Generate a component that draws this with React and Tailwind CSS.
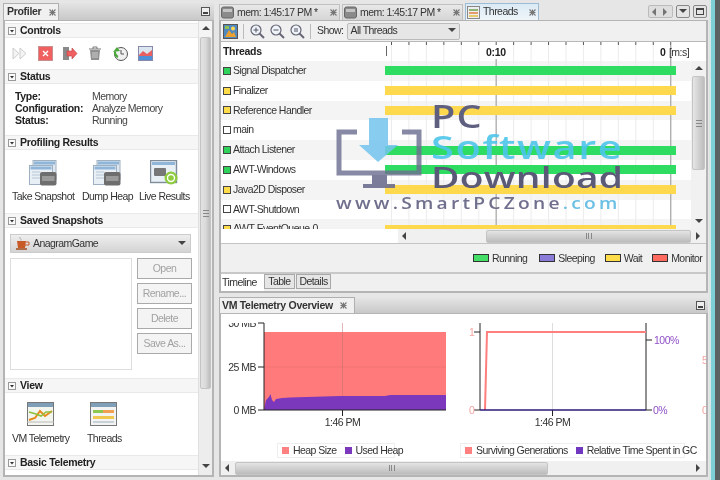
import React from "react";

const B = "font-bold tracking-[-0.3px]";

function Tri({ dir = "down", cls = "" }) {
  const p = { down: "0,1 8,1 4,5", up: "0,5 8,5 4,1", left: "5,0 5,8 1,4", right: "1,0 1,8 5,4" }[dir];
  return (
    <svg width="8" height="8" viewBox="0 0 8 8" className={`shrink-0 ${cls}`}>
      <polygon points={p} fill="#444" />
    </svg>
  );
}

function CloseX() {
  return (
    <svg width="7" height="7" viewBox="0 0 7 7" className="shrink-0">
      <path d="M0.5 0.5 L6.5 6.5 M6.5 0.5 L0.5 6.5 M0.5 3.5 H6.5 M3.5 .5 V6.5" stroke="#777" strokeWidth="1.1" />
    </svg>
  );
}

function Minimize() {
  return (
    <div className="w-[9px] h-[9px] border border-[#555] bg-[#eee] flex items-end justify-center pb-[1px]">
      <div className="w-[5px] h-[2px] bg-[#444]" />
    </div>
  );
}

function SectionHeader({ title }) {
  return (
    <div className="flex items-center h-[15px] shrink-0 bg-[#f6f6f6] border-y border-[#e9e9e9] pl-[3px] gap-[4px]">
      <div className="w-[8px] h-[8px] border border-[#999] bg-[#fafafa] flex items-center justify-center">
        <svg width="6" height="6" viewBox="0 0 6 6"><polygon points="1,2 5,2 3,4.5" fill="#333" /></svg>
      </div>
      <span className={`${B} text-[#222] leading-none`}>{title}</span>
    </div>
  );
}

const SnapIcon = () => (
  <svg width="28" height="26" viewBox="0 0 28 26" className="shrink-0">
    <rect x="4" y="0.5" width="23" height="19" fill="#dfe8f0" stroke="#9fb0c0" />
    <rect x="5" y="1.5" width="21" height="3" fill="#8fb6d8" />
    <rect x="0.5" y="5.5" width="23" height="19" fill="#e8eff5" stroke="#9fb0c0" />
    <rect x="1.5" y="6.5" width="21" height="3" fill="#8fb6d8" />
    <path d="M3 12h8M3 15h8M3 18h8" stroke="#b5c5d3" />
    <rect x="11" y="12" width="16.5" height="13.5" rx="2" fill="#6e6e6e" />
    <rect x="13" y="16" width="12.5" height="5" fill="#9a9a9a" />
  </svg>
);

const LiveIcon = () => (
  <svg width="28" height="26" viewBox="0 0 28 26" className="shrink-0">
    <rect x="0.5" y="0.5" width="26" height="22" fill="#e8eff5" stroke="#7f8c99" strokeWidth="1.4" />
    <rect x="2" y="2" width="23" height="3" fill="#8fb6d8" />
    <rect x="4" y="8" width="12" height="8" rx="1" fill="#777" />
    <circle cx="21" cy="18" r="6.5" fill="#8ecb3e" />
    <circle cx="21" cy="18" r="3.5" fill="none" stroke="#fff" strokeWidth="1.4" />
  </svg>
);

const VmIcon = () => (
  <svg width="27" height="24" viewBox="0 0 27 24" className="shrink-0">
    <rect x="0.5" y="0.5" width="26" height="23" fill="#f3f5ef" stroke="#777" />
    <rect x="1" y="1" width="25" height="4" fill="#7f9fb8" />
    <path d="M2 18 L8 16 L13 9 L18 14 L25 9" stroke="#e88a1c" strokeWidth="2" fill="none" />
    <path d="M2 10 L9 12 L14 14 L19 10 L25 10" stroke="#90c040" strokeWidth="1.6" fill="none" />
    <path d="M0 20 H27" stroke="#bbb" />
  </svg>
);

const ThreadsIcon = () => (
  <svg width="27" height="24" viewBox="0 0 27 24" className="shrink-0">
    <rect x="0.5" y="0.5" width="26" height="23" fill="#f3f3f3" stroke="#777" />
    <rect x="1" y="1" width="25" height="4" fill="#7f9fb8" />
    <rect x="3" y="8" width="10" height="3" fill="#8cc850" />
    <rect x="13" y="8" width="11" height="3" fill="#f0a050" />
    <rect x="3" y="14" width="21" height="3" fill="#f0c850" />
    <rect x="3" y="19" width="21" height="2" fill="#c8d0d8" />
  </svg>
);

const TabIconGrey = () => (
  <svg width="13" height="13" viewBox="0 0 13 13" className="shrink-0">
    <rect x="0.5" y="1" width="12" height="11" rx="2" fill="#8a8a8a" stroke="#666" />
    <rect x="2" y="3" width="9" height="3" fill="#c4c4c4" />
  </svg>
);

function DisabledBtn({ children }) {
  return (
    <div className="h-[21px] w-[55px] border border-[#aaa] bg-[#f4f4f4] flex items-center justify-center text-[#a2a2a2]">
      {children}
    </div>
  );
}

function Left() {
  return (
    <div className="w-[211px] h-[474px] flex flex-col shrink-0">
      <div className="flex h-[17px] bg-[#d4d4d4] shrink-0">
        <div className="w-[56px] h-[17px] bg-[#f0f0f0] border border-b-0 border-[#b0b0b0] flex items-center pl-[3px] gap-[8px]">
          <span className={`${B} text-[#333]`}>Profiler</span>
          <CloseX />
        </div>
        <div className="flex-1 flex items-center justify-end pr-[4px] bg-gradient-to-b from-[#e4e4e4] to-[#c8c8c8]"><Minimize /></div>
      </div>
      <div className="flex-1 flex border-2 border-t border-[#b4b4b4] bg-white overflow-hidden">
        <div className="w-[195px] flex flex-col pt-[2px]">
          <SectionHeader title="Controls" />
          <div className="h-[31px] shrink-0 flex items-center pl-[7px] gap-[10px]">
            <svg width="15" height="15" viewBox="0 0 15 15"><path d="M1 2 L7 7.5 L1 13 Z M8 2 L14 7.5 L8 13 Z" fill="#f4f4f4" stroke="#ccc" /></svg>
            <svg width="15" height="15" className="ml-[1px]" viewBox="0 0 15 15"><rect x=".5" y=".5" width="14" height="14" fill="#f06060" stroke="#c89090" /><path d="M5 5 L10 10 M10 5 L5 10" stroke="#fff" strokeWidth="1.4" /></svg>
            <svg width="16" height="15" className="-ml-[1px]" viewBox="0 0 16 15"><rect x="1" y="1" width="6" height="13" fill="#8a8a8a" /><path d="M5 5 H10 V2 L15 7.5 L10 13 V10 H5 Z" fill="#f06060" stroke="#c04040" strokeWidth=".6" /></svg>
            <svg width="14" height="15" viewBox="0 0 14 15"><path d="M1 3 H13 M5 3 V1 H9 V3" stroke="#777" fill="none" /><path d="M2 4 H12 L11 14 H3 Z" fill="#909090" /><path d="M5 6 V12 M7 6 V12 M9 6 V12" stroke="#ccc" /></svg>
            <svg width="15" height="15" className="ml-[1px]" viewBox="0 0 15 15"><circle cx="8" cy="8" r="6.5" fill="#f0f0f0" stroke="#555" /><path d="M8 4 V8 H11" stroke="#555" fill="none" /><path d="M0 6 L4 1 L7 5 Z" fill="#4aa838" /><path d="M2 6 A5 5 0 0 0 5 11" stroke="#4aa838" strokeWidth="2" fill="none" /></svg>
            <svg width="15" height="15" viewBox="0 0 15 15"><rect x=".5" y=".5" width="14" height="14" fill="#dce6f0" stroke="#88a" /><path d="M1 9 L5 5 L9 8 L14 4 V10 H1 Z" fill="#e86060" /><path d="M1 10 H14 V14 H1 Z" fill="#5090d8" /></svg>
          </div>
          <SectionHeader title="Status" />
          <div className="h-[51px] shrink-0 pt-[6px] pl-[10px] leading-[12px] text-[#444] grid grid-cols-[77px_1fr] content-start">
            <span className={`${B} text-[#222]`}>Type:</span><span>Memory</span>
            <span className={`${B} text-[#222]`}>Configuration:</span><span>Analyze Memory</span>
            <span className={`${B} text-[#222]`}>Status:</span><span>Running</span>
          </div>
          <SectionHeader title="Profiling Results" />
          <div className="h-[63px] shrink-0">
            <div className="flex pt-[10px] pl-[24px]">
              <SnapIcon /><div className="w-[36px] shrink-0" /><SnapIcon /><div className="w-[29px] shrink-0" /><LiveIcon />
            </div>
            <div className="flex pl-[7px] mt-[3px] leading-[14px] text-[#333] whitespace-nowrap">
              <span className="w-[70px]">Take Snapshot</span><span className="w-[57px]">Dump Heap</span><span>Live Results</span>
            </div>
          </div>
          <SectionHeader title="Saved Snapshots" />
          <div className="h-[150px] shrink-0 pl-[5px] pt-[6px] flex flex-col">
            <div className="w-[181px] h-[19px] border border-[#ccc] bg-gradient-to-b from-[#eeeeee] to-[#d4d4d4] flex items-center pl-[4px] pr-[4px]">
              <svg width="15" height="15" viewBox="0 0 15 15"><path d="M2 5 H11 L10 12 H3 Z" fill="#c85a28" /><path d="M11 6 H14 V9 H10" stroke="#c85a28" fill="none" /><path d="M1 13 H12" stroke="#a04818" strokeWidth="1.5" /><path d="M5 1 C4 3 7 3 6 4.5" stroke="#aaa" fill="none" /></svg>
              <span className="ml-[3px] text-[#333] flex-1">AnagramGame</span>
              <Tri />
            </div>
            <div className="flex mt-[5px] gap-[5px]">
              <div className="w-[122px] h-[112px] border border-[#ddd] bg-white" />
              <div className="flex flex-col gap-[4px]">
                <DisabledBtn>Open</DisabledBtn>
                <DisabledBtn>Rename...</DisabledBtn>
                <DisabledBtn>Delete</DisabledBtn>
                <DisabledBtn>Save As...</DisabledBtn>
              </div>
            </div>
          </div>
          <SectionHeader title="View" />
          <div className="h-[62px] shrink-0">
            <div className="flex pt-[9px] pl-[22px] gap-[36px]"><VmIcon /><ThreadsIcon /></div>
            <div className="flex pl-[7px] mt-[5px] leading-[14px] text-[#333]">
              <span className="w-[75px]">VM Telemetry</span><span>Threads</span>
            </div>
          </div>
          <SectionHeader title="Basic Telemetry" />
        </div>
        <div className="w-[14px] flex flex-col bg-[#ededed] border-l border-[#e0e0e0]">
          <div className="h-[16px] flex items-center justify-center bg-[#f4f4f4]"><Tri dir="up" /></div>
          <div className="h-[352px] mx-[1px] bg-gradient-to-r from-[#e2e2e2] via-[#dadada] to-[#bcbcbc] border border-[#c4c4c4] rounded-[2px] flex items-center justify-center">
            <div className="w-[6px] h-[7px] border-y border-[#888] flex items-center"><div className="w-full h-[1px] bg-[#888]" /></div>
          </div>
          <div className="flex-1" />
          <div className="h-[16px] flex items-center justify-center"><Tri /></div>
        </div>
      </div>
    </div>
  );
}

const threads = [
  ["Signal Dispatcher", "g"], ["Finalizer", "y"], ["Reference Handler", "y"], ["main", "w"],
  ["Attach Listener", "g"], ["AWT-Windows", "g"], ["Java2D Disposer", "y"], ["AWT-Shutdown", "w"], ["AWT-EventQueue-0", "y"],
];
const sq = { g: "bg-[#2fd35a]", y: "bg-[#ffdc4a]", w: "bg-white" };
const bar = { g: "bg-[#2fdc62]", y: "bg-[#ffd94d]" };

function Tab() {
  return (
    <div className="w-[121px] h-[16px] mr-[2px] bg-gradient-to-b from-[#e8e8e8] to-[#d6d6d6] border border-[#c0c0c0] border-b-0 flex items-center pl-[1px] pr-[2px] gap-[3px]">
      <TabIconGrey />
      <span className="text-[#333] flex-1 whitespace-nowrap">mem: 1:45:17 PM *</span>
      <CloseX />
    </div>
  );
}

function Swatch({ color, label, ml = "" }) {
  return (
    <div className={`flex items-center gap-[3px] ${ml}`}>
      <div className={`w-[16px] h-[8px] border border-[#333] ${color}`} />
      <span className="text-[#333] leading-none">{label}</span>
    </div>
  );
}

function Threads() {
  const ticks = Array.from({ length: 17 }, (_, i) => 6.5 + i * 17.45);
  return (
    <div className="relative h-[187px] flex flex-col overflow-hidden">
      <svg className="absolute left-[164px] top-0 z-0" width="312" height="187">
        {ticks.map((x, i) => (
          <g key={i}>
            <path d={`M${x} 0V3`} stroke="#555" />
            <path d={`M${x} 3V187`} stroke={i === 6 || i === 16 ? "#b0b0b0" : "#ececec"} strokeWidth={i === 6 || i === 16 ? 1.4 : 1} />
          </g>
        ))}
      </svg>
      <div className="h-[19px] shrink-0 flex items-center relative z-10">
        <span className={`pl-[2px] ${B} text-[#222]`}>Threads</span>
        <div className="absolute left-[165px] top-[4px] w-[1px] h-[10px] bg-[#666]" />
        <span className={`absolute left-[265px] top-[3px] bg-white ${B} text-[#222] leading-[14px]`}>0:10</span>
        <span className={`absolute left-[439px] top-[3px] ${B} text-[#222] leading-[14px]`}>0</span>
        <span className="absolute left-[448px] top-[3px] text-[#333] leading-[14px]">[m:s]</span>
      </div>
      {threads.map(([n, c], i) => (
        <div key={n} className={`flex items-center h-[19.8px] shrink-0 ${i % 2 === 0 ? "bg-[#f4f4f4]" : "bg-white"}`}>
          <div className="w-[164px] shrink-0 flex items-center pl-[2px] gap-[2px] relative z-10">
            <div className={`w-[8px] h-[8px] border border-[#444] ${sq[c]}`} />
            <span className="text-[#333] whitespace-nowrap">{n}</span>
          </div>
          {bar[c] && <div className={`w-[291px] h-[9px] relative z-10 ${bar[c]}`} />}
        </div>
      ))}
      <div className="absolute right-0 top-[19px] bottom-0 w-[15px] bg-[#f1f1f1] z-20 flex flex-col items-center">
        <div className="h-[15px] flex items-center"><Tri dir="up" /></div>
        <div className="h-[94px] w-[13px] bg-gradient-to-r from-[#e6e6e6] to-[#bdbdbd] border border-[#c4c4c4] rounded-[2px] flex items-center justify-center">
          <div className="w-[6px] h-[7px] border-y border-[#888] flex items-center"><div className="w-full h-[1px] bg-[#888]" /></div>
        </div>
        <div className="flex-1" />
        <div className="h-[14px] flex items-center"><Tri /></div>
      </div>
    </div>
  );
}

function HScroll({ left, thumb, ml }) {
  return (
    <div className="h-[14px] flex bg-white items-stretch shrink-0">
      <div className={ml} />
      <div className="flex-1 flex bg-[#f0f0f0] items-center">
        <div className="w-[14px] flex justify-center shrink-0"><Tri dir="left" /></div>
        <div className={left} />
        <div className={`h-[13px] ${thumb} bg-gradient-to-b from-[#e4e4e4] to-[#bcbcbc] border border-[#c4c4c4] rounded-[2px] flex items-center justify-center`}>
          <div className="w-[6px] h-[6px] border-x border-[#888] flex justify-center"><div className="h-full w-[1px] bg-[#888]" /></div>
        </div>
        <div className="flex-1" />
        <div className="w-[14px] flex justify-center shrink-0"><Tri dir="right" /></div>
      </div>
    </div>
  );
}

function Charts() {
  const pale = "#f4a5a0";
  const font = { fontFamily: "'Liberation Sans', sans-serif", fontSize: 10.5, letterSpacing: -0.5 };
  return (
    <svg width="487" height="130" viewBox="0 0 487 130" className="block shrink-0 -mt-[1px]" style={font}>
      <defs>
        <clipPath id="topClip"><rect x="0" y="10" width="44" height="12" /></clipPath>
      </defs>
      <g transform="translate(-1,0)">
        <rect x="44" y="19" width="182" height="78" fill="#ff7b7b" />
        <path d="M122.5 10V97" stroke="#c07070" strokeOpacity=".5" />
        <path d="M44 54H226" stroke="#c06060" strokeOpacity=".25" />
        <path d="M44 97 L46 87 L49 84 L50.5 81 L52 87 L54 89 L56 86 L62 85 L70 84.5 L120 83 L165 83 L170 82 L226 82 V97 Z" fill="#7b38bd" />
        <path d="M44 10V97H226" stroke="#222" fill="none" />
        <path d="M38 10H44M38 54H44M38 97H44M122.5 97V103" stroke="#222" fill="none" />
        <text x="36" y="14" textAnchor="end" fill="#333" clipPath="url(#topClip)">30 MB</text>
        <text x="36" y="58" textAnchor="end" fill="#333">25 MB</text>
        <text x="36" y="101" textAnchor="end" fill="#333">0 MB</text>
        <text x="122.5" y="113" textAnchor="middle" fill="#333">1:46 PM</text>

        <path d="M332.5 10V97" stroke="#ddd" />
        <path d="M260 10V97M426 10V97" stroke="#222" fill="none" />
        <path d="M254 19H260M254 97H260M332.5 97V103M426 27H432M426 97H432" stroke="#222" fill="none" />
        <path d="M265 97L267 19H426" stroke="#ff7f7f" strokeWidth="2" fill="none" />
        <path d="M260 97H426" stroke="#2c1a78" strokeWidth="1.4" />
        <text x="249" y="23" fill={pale}>1</text>
        <text x="249" y="101" fill={pale}>0</text>
        <text x="434" y="31" fill="#9050c8">100%</text>
        <text x="433" y="101" fill="#9050c8">0%</text>
        <text x="332.5" y="113" textAnchor="middle" fill="#333">1:46 PM</text>
        <text x="482" y="51" fill={pale}>5</text>
        <text x="482" y="101" fill={pale}>0</text>
      </g>
    </svg>
  );
}

function Right() {
  return (
    <div className="w-[489px] h-[474px] flex flex-col shrink-0">
      <div className="h-[17px] shrink-0 flex items-end bg-[#e6e6e6]">
        <Tab /><Tab />
        <div className="w-[74px] h-[17px] bg-gradient-to-b from-[#dbeaf5] to-[#f0f6fa] border border-[#9dbcd4] border-b-0 flex items-center pl-[1px] pr-[2px] gap-[3px]">
          <svg width="13" height="13" viewBox="0 0 13 13"><rect x=".5" y=".5" width="12" height="12" fill="#eee" stroke="#888" /><path d="M2 4H11" stroke="#70a050" strokeWidth="1.5" /><path d="M2 7H11" stroke="#e08040" strokeWidth="1.5" /><path d="M2 10H11" stroke="#e0c040" strokeWidth="1.5" /></svg>
          <span className="text-[#333] flex-1">Threads</span>
          <CloseX />
        </div>
        <div className="flex-1 flex justify-end items-center self-center pr-[1px] gap-[3px]">
          <div className="w-[25px] h-[13px] border border-[#aaa] rounded-[2px] bg-[#dcdcdc] flex items-center justify-around opacity-70"><Tri dir="left" /><Tri dir="right" /></div>
          <div className="w-[14px] h-[13px] border border-[#888] rounded-[2px] bg-[#e4e4e4] flex items-center justify-center"><Tri /></div>
          <div className="w-[14px] h-[13px] border border-[#888] rounded-[2px] bg-[#e4e4e4] flex items-center justify-center"><div className="w-[8px] h-[7px] border border-[#444] border-t-2" /></div>
        </div>
      </div>
      <div className="h-[273px] shrink-0 border-2 border-t border-[#b4b4b4] bg-[#f0f0f0] flex flex-col overflow-hidden">
        <div className="h-[21px] flex items-center pl-[2px] shrink-0 border-b border-[#b8b8b8]">
          <svg width="15" height="15" viewBox="0 0 15 15"><rect x=".5" y=".5" width="14" height="14" fill="#5088c0" stroke="#555" /><path d="M2 13 L6 6 L9 10 L11 8 L13 13 Z" fill="#e8a030" /><circle cx="10" cy="4.5" r="2" fill="#ffd850" /><rect x="2" y="2" width="4" height="3" fill="#90c050" /></svg>
          <div className="w-[1px] h-[15px] bg-[#bbb] ml-[5px]" />
          <div className="flex gap-[5px] ml-[6px]">
            {["+", "-", "="].map((k) => (
              <svg key={k} width="15" height="15" viewBox="0 0 15 15">
                <circle cx="6" cy="6" r="5" fill="#eef4f8" stroke="#667" strokeWidth="1.2" />
                <path d="M9.5 9.5L14 14" stroke="#667" strokeWidth="2" />
                {k !== "=" && <path d="M3.5 6H8.5" stroke="#556" />}
                {k === "+" && <path d="M6 3.5V8.5" stroke="#556" />}
                {k === "=" && <path d="M4 5H8M4 7H8" stroke="#556" />}
              </svg>
            ))}
          </div>
          <div className="w-[1px] h-[15px] bg-[#bbb] ml-[5px]" />
          <span className="ml-[6px] text-[#333]">Show:</span>
          <div className="ml-[4px] w-[113px] h-[17px] border border-[#bbb] rounded-[2px] bg-[#e6e6e6] flex items-center pl-[2px] pr-[3px]">
            <span className="text-[#333] flex-1">All Threads</span>
            <Tri />
          </div>
        </div>
        <div className="bg-white shrink-0"><Threads /></div>
        <HScroll ml="w-[177px]" left="w-[74px]" thumb="w-[205px]" />
        <div className="h-[29px] shrink-0 border-t border-[#c4c4c4] flex items-center pl-[252px]">
          <Swatch color="bg-[#44dd66]" label="Running" />
          <Swatch color="bg-[#8b7bd8]" label="Sleeping" ml="ml-[12px]" />
          <Swatch color="bg-[#ffdc4a]" label="Wait" ml="ml-[10px]" />
          <Swatch color="bg-[#ff6a5e]" label="Monitor" ml="ml-[10px]" />
        </div>
        <div className="flex-1 flex border-t-2 border-[#c8c8c8] items-start">
          <div className="w-[43px] h-[18px] bg-white flex items-center pl-[1px] text-[#333]">Timeline</div>
          <div className="w-[31px] h-[15px] bg-[#e6e6e6] border border-[#a8a8a8] flex items-center justify-center text-[#333]">Table</div>
          <div className="w-[35px] h-[15px] bg-[#e6e6e6] border border-[#a8a8a8] ml-[1px] flex items-center justify-center text-[#333]">Details</div>
        </div>
      </div>
      <div className="mt-[4px] h-[16px] flex shrink-0">
        <div className="w-[136px] bg-[#f0f0f0] border border-b-0 border-[#b0b0b0] flex items-center pl-[2px] gap-[7px]">
          <span className={`${B} text-[#333] whitespace-nowrap`}>VM Telemetry Overview</span>
          <CloseX />
        </div>
        <div className="flex-1 bg-gradient-to-b from-[#e6e6e6] to-[#c8c8c8] flex items-center justify-end pr-[3px]"><Minimize /></div>
      </div>
      <div className="flex-1 border-2 border-t border-[#b4b4b4] bg-white flex flex-col overflow-hidden">
        <Charts />
        <div className="h-[15px] flex text-[#333] shrink-0 whitespace-nowrap">
          <div className="ml-[56px] w-[118px] border border-[#eee] flex items-center pl-[4px] gap-[4px]">
            <div className="w-[7px] h-[7px] shrink-0 bg-[#ff8080]" /><span>Heap Size</span>
            <div className="w-[7px] h-[7px] shrink-0 bg-[#7b38bd] ml-[4px]" /><span>Used Heap</span>
          </div>
          <div className="ml-[65px] w-[225px] border border-[#eee] flex items-center pl-[4px] gap-[4px]">
            <div className="w-[7px] h-[7px] shrink-0 bg-[#ff8080]" /><span>Surviving Generations</span>
            <div className="w-[7px] h-[7px] shrink-0 bg-[#7038c0] ml-[4px]" /><span>Relative Time Spent in GC</span>
          </div>
        </div>
        <div className="flex-1" />
        <HScroll ml="w-0" left="w-0" thumb="w-[313px]" />
      </div>
    </div>
  );
}

function Watermark() {
  const f = "font-['Open_Sans',sans-serif] leading-none whitespace-nowrap origin-left";
  return (
    <div className="absolute left-[336px] top-[100px] w-[290px] h-[112px] z-30 pointer-events-none">
      <svg className="absolute left-0 top-[18px] opacity-90" width="88" height="72" viewBox="0 0 88 72">
        <path d="M21 14 H3 V55 H83 V14 H66" fill="none" stroke="#6d6f90" strokeWidth="5" strokeOpacity=".9" />
        <path d="M36 57 V66 H27 V70 H59 V66 H51 V57 Z" fill="#6d6f90" />
        <path d="M33 0 H52 V27 H62 L42 44 L23 27 H33 Z" fill="#74c4ee" fillOpacity=".95" />
      </svg>
      <div className={`${f} absolute left-[95px] top-[-1px] text-[33px] font-semibold text-[#5f5f80] tracking-[1px] scale-x-[1.2]`}>PC</div>
      <div className={`${f} absolute left-[95px] top-[31px] text-[32px] font-semibold text-[#4cc4ea]/90 tracking-[1.2px] scale-x-[1.3]`}>Software</div>
      <div className={`${f} absolute left-[95px] top-[63px] text-[28px] font-semibold text-[#5a5a78] tracking-[0.2px] scale-x-[1.39]`}>Download</div>
      <div className={`${f} absolute left-0 top-[95px] text-[16px] font-semibold text-[#70708e] tracking-[2.7px] scale-x-[1.2]`}>
        www.SmartPCZone<span className="text-[#6cc0e4]">.com</span>
      </div>
    </div>
  );
}

export default function App() {
  return (
    <div className="relative w-[720px] h-[480px] overflow-hidden flex bg-[#e6e6e6] pt-[3px] pl-[3px] font-['Liberation_Sans',sans-serif] text-[10.5px] tracking-[-0.55px] blur-[0.5px]">
      <Left />
      <div className="w-[5px] shrink-0" />
      <Right />
      <div className="flex w-[12px] h-[480px] -mt-[3px] ml-[1px] shrink-0">
        <div className="w-[2px] bg-[#d8e6e8]" />
        <div className="w-[4px] bg-[#7fd0d6]" />
        <div className="flex-1 bg-[#5c6264]" />
      </div>
      <Watermark />
    </div>
  );
}
